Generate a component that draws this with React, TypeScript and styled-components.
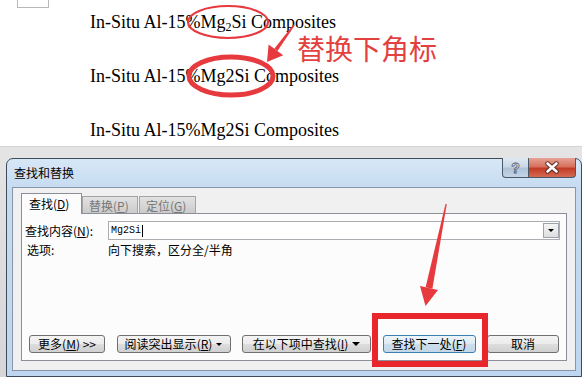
import React from 'react';
import styled, { createGlobalStyle } from 'styled-components';

const UI_FONT = `"Noto Sans CJK SC", "Liberation Sans", sans-serif`;
const RED = '#e63a3e';

const GlobalStyle = createGlobalStyle`
  html, body { margin: 0; padding: 0; }
  body { width: 582px; height: 377px; overflow: hidden; background: #e4e4e4; }
`;

const Screen = styled.div`
  position: relative;
  width: 582px;
  height: 377px;
  overflow: hidden;
  background: linear-gradient(180deg, #ededed 0%, #d6d6d6 100%);
`;

// WORD PAGE
const Page = styled.div`
  height: 146px;
  background: #fff;
  border-bottom: 1px solid #d2d2d2;
`;

const CornerMark = styled.div`
  margin-left: 17px;
  width: 30px;
  height: 7px;
  border: 1px solid #b8b8b8;
  border-top: none;
`;

const Lines = styled.div`
  margin-top: 4px;
  padding-left: 90px;
  display: flex;
  flex-direction: column;
  gap: 34px;
  font-family: 'Liberation Serif', serif;
  font-size: 18px;
  line-height: 20px;
  color: #000;
`;

const Sub = styled.span`
  font-size: 12px;
  line-height: 0;
  vertical-align: -3px;
`;

// DIALOG
const Window = styled.div`
  margin: 11px 0 0 6px;
  width: 576px;
  height: 219px;
  box-sizing: border-box;
  border: 1px solid #3d4b5b;
  border-radius: 7px 7px 0 0;
  padding: 0 5px 5px;
  background: linear-gradient(180deg, #d6e7f7 0%, #c6dbf1 14%, #bed6ef 100%);
  display: flex;
  flex-direction: column;
`;

const TitleBar = styled.div`
  height: 28px;
  display: flex;
  align-items: center;
  padding-left: 2px;
  font-family: ${UI_FONT};
  font-size: 12px;
  line-height: 1;
  color: #000;
`;

const Captions = styled.div`
  margin-left: auto;
  align-self: flex-start;
  margin-top: -1px;
  display: flex;
`;

const CaptionButton = styled.div<{ $close?: boolean }>`
  box-sizing: border-box;
  width: ${p => (p.$close ? 47 : 27)}px;
  height: 20px;
  border: 1px solid #4b5868;
  border-top: none;
  border-left: ${p => (p.$close ? 'none' : '1px solid #4b5868')};
  border-radius: ${p => (p.$close ? '0 0 4px 0' : '0 0 0 4px')};
  background: ${p =>
    p.$close
      ? 'linear-gradient(180deg, #e6a396 0%, #d8705d 45%, #c23b26 55%, #d66a52 100%)'
      : 'linear-gradient(180deg, #dfe8f2 0%, #c9d7e6 45%, #afc3d8 55%, #c4d4e5 100%)'};
  display: flex;
  align-items: center;
  justify-content: center;
`;

const HelpGlyph = styled.span`
  font-family: 'Liberation Sans', sans-serif;
  font-weight: bold;
  font-size: 14px;
  line-height: 1;
  color: #f4f7fa;
  -webkit-text-stroke: 0.8px #4a5868;
`;

const Client = styled.div`
  flex: 1;
  box-sizing: border-box;
  border: 1px solid #8795a7;
  background: #f0f0f0;
  padding: 5px 8px 9px;
  display: flex;
  flex-direction: column;
  font-family: ${UI_FONT};
  font-size: 12px;
  color: #000;
`;

const TabRow = styled.div`
  display: flex;
  align-items: flex-end;
  height: 21px;
  margin-bottom: -1px;
  position: relative;
  z-index: 1;
`;

const Tab = styled.div<{ $active?: boolean; $w: number; $gap?: number }>`
  box-sizing: border-box;
  width: ${p => p.$w}px;
  height: ${p => (p.$active ? 21 : 18)}px;
  margin-left: ${p => p.$gap || 0}px;
  padding-left: ${p => (p.$active ? 7 : 6)}px;
  padding-top: ${p => (p.$active ? 0 : 2)}px;
  display: flex;
  align-items: center;
  border: 1px solid ${p => (p.$active ? '#8c8f99' : '#a4a4a4')};
  border-bottom: ${p => (p.$active ? 'none' : '1px solid #8c8f99')};
  background: ${p => (p.$active ? '#fcfcfc' : 'linear-gradient(180deg, #e2e2e2 0%, #cbcbcb 100%)')};
  color: ${p => (p.$active ? '#000' : '#777')};
  line-height: 1;
`;

const Panel = styled.div`
  flex: 1;
  box-sizing: border-box;
  border: 1px solid #8c8f99;
  background: #fcfcfc;
  padding: 7px 6px 7px 3px;
  display: flex;
  flex-direction: column;
`;

const FieldRow = styled.div`
  display: flex;
  align-items: center;
  height: 19px;
`;

const Label = styled.span<{ $w: number }>`
  width: ${p => p.$w}px;
  flex-shrink: 0;
  line-height: 1;
`;

const Combo = styled.div`
  flex: 1;
  box-sizing: border-box;
  height: 19px;
  border: 1px solid #abadb3;
  background: #fff;
  display: flex;
  align-items: center;
  padding-left: 2px;
`;

const ComboText = styled.span`
  font-family: 'Liberation Mono', monospace;
  font-size: 10px;
  line-height: 1;
  color: #000;
`;

const Caret = styled.span`
  width: 1px;
  height: 12px;
  margin-left: 1px;
  background: #000;
`;

const DropButton = styled.div`
  margin-left: auto;
  box-sizing: border-box;
  width: 16px;
  height: 15px;
  border: 1px solid #9da3ab;
  background: linear-gradient(180deg, #f6f6f6 0%, #dedede 100%);
  display: flex;
  align-items: center;
  justify-content: center;
`;

const Triangle = styled.span<{ $size?: number }>`
  display: inline-block;
  width: 0;
  height: 0;
  border-left: ${p => p.$size || 3}px solid transparent;
  border-right: ${p => p.$size || 3}px solid transparent;
  border-top: ${p => p.$size || 3}px solid #000;
`;

const OptionRow = styled.div`
  margin-top: 4px;
  height: 12px;
  display: flex;
  align-items: center;
  padding-left: 2px;
  line-height: 1;
`;

const ButtonRow = styled.div`
  margin-top: auto;
  display: flex;
  justify-content: space-between;
  padding: 0 1px 0 4px;
`;

const Button = styled.div<{ $w: number; $default?: boolean }>`
  box-sizing: border-box;
  width: ${p => p.$w}px;
  height: 18px;
  border: 1px solid ${p => (p.$default ? '#3c7fb1' : '#707070')};
  border-radius: 3px;
  background: ${p =>
    p.$default
      ? 'linear-gradient(180deg, #eef5fa 0%, #dde9f2 50%, #cddeeb 51%, #c3d8e8 100%)'
      : 'linear-gradient(180deg, #f4f4f4 0%, #ebebeb 50%, #dddddd 51%, #d0d0d0 100%)'};
  display: flex;
  align-items: center;
  justify-content: center;
  gap: 4px;
  line-height: 1;
  color: #000;
`;

// ANNOTATIONS
const Overlay = styled.svg`
  position: absolute;
  left: 0;
  top: 0;
  pointer-events: none;
  z-index: 5;
`;

const Callout = styled.div`
  position: absolute;
  left: 297px;
  top: 34px;
  font-family: ${UI_FONT};
  font-size: 28px;
  line-height: 28px;
  color: #e2413f;
  z-index: 5;
`;

const Key = ({ k }: { k: string }) => (
  <>
    (<u>{k}</u>)
  </>
);

const Title = ({ text, mark }: { text: string; mark: string }) => (
  <span>
    {text}
    <Key k={mark} />
  </span>
);

export default function App() {
  return (
    <Screen>
      <GlobalStyle />
      <Page>
        <CornerMark />
        <Lines>
          <div>
            In-Situ Al-15%Mg<Sub>2</Sub>Si Composites
          </div>
          <div>In-Situ Al-15%Mg2Si Composites</div>
          <div>In-Situ Al-15%Mg2Si Composites</div>
        </Lines>
      </Page>

      <Window>
        <TitleBar>
          <span>查找和替换</span>
          <Captions>
            <CaptionButton>
              <HelpGlyph>?</HelpGlyph>
            </CaptionButton>
            <CaptionButton $close>
              <svg width="18" height="13" viewBox="0 0 18 13">
                <path d="M4.5 2.5 L13.5 10.5 M13.5 2.5 L4.5 10.5" stroke="#5a2a22" strokeWidth="4.4" strokeLinecap="round" />
                <path d="M4.5 2.5 L13.5 10.5 M13.5 2.5 L4.5 10.5" stroke="#fff" strokeWidth="2.6" strokeLinecap="round" />
              </svg>
            </CaptionButton>
          </Captions>
        </TitleBar>

        <Client>
          <TabRow>
            <Tab $active $w={61}>
              <Title text="查找" mark="D" />
            </Tab>
            <Tab $w={56}>
              <Title text="替换" mark="P" />
            </Tab>
            <Tab $w={57} $gap={1}>
              <Title text="定位" mark="G" />
            </Tab>
          </TabRow>

          <Panel>
            <FieldRow>
              <Label $w={83}>
                查找内容<Key k="N" />:
              </Label>
              <Combo>
                <ComboText>Mg2Si</ComboText>
                <Caret />
                <DropButton>
                  <Triangle />
                </DropButton>
              </Combo>
            </FieldRow>

            <OptionRow>
              <Label $w={81}>选项:</Label>
              <span>向下搜索，区分全/半角</span>
            </OptionRow>

            <ButtonRow>
              <Button $w={76}>
                <span>
                  更多<Key k="M" /> &gt;&gt;
                </span>
              </Button>
              <Button $w={114}>
                <span>
                  阅读突出显示<Key k="R" />
                </span>
                <Triangle $size={3} />
              </Button>
              <Button $w={129}>
                <span>
                  在以下项中查找<Key k="I" />
                </span>
                <Triangle $size={4} />
              </Button>
              <Button $w={93} $default>
                <span>
                  查找下一处<Key k="F" />
                </span>
              </Button>
              <Button $w={72}>取消</Button>
            </ButtonRow>
          </Panel>
        </Client>
      </Window>

      <Overlay width="582" height="377" viewBox="0 0 582 377">
        <ellipse cx="228" cy="22" rx="40" ry="16" fill="none" stroke={RED} strokeWidth="2.2" />
        <ellipse cx="231" cy="76" rx="42" ry="19" fill="none" stroke={RED} strokeWidth="5" />
        <polygon points="293.4,24.6 294.6,25.4 277.5,51.1 274.3,48.7" fill={RED} />
        <polygon points="268.6,44.6 283.2,55.2 267,62" fill={RED} />
        <polygon points="445.5,204 446.8,204 432.4,288.7 425.6,287.3" fill={RED} />
        <polygon points="420,286 438,290 425.5,306" fill={RED} />
        <rect x="375" y="316" width="110" height="48" fill="none" stroke="#e8262c" strokeWidth="6" />
      </Overlay>
      <Callout>替换下角标</Callout>
    </Screen>
  );
}
